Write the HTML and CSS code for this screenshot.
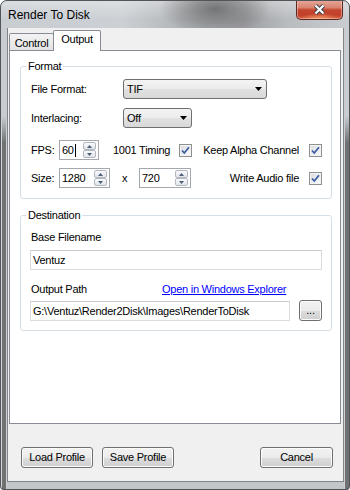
FILE: index.html
```html
<!DOCTYPE html>
<html>
<head>
<meta charset="utf-8">
<title>Render To Disk</title>
<link rel="stylesheet" href="styles.css">
</head>
<body>
<div class="window">
  <div class="titlebar">
    <span class="title">Render To Disk</span>
    <div class="close-btn">
      <svg width="13" height="11" viewBox="0 0 13 11"><path d="M2.5 1.5 L10.5 9.5 M10.5 1.5 L2.5 9.5" stroke="#39404c" stroke-width="4.2" fill="none"/><path d="M2.5 1.5 L10.5 9.5 M10.5 1.5 L2.5 9.5" stroke="#ffffff" stroke-width="2.2" fill="none"/></svg>
    </div>
  </div>
  <div class="frame">
    <div class="client">
      <div class="tabstrip">
        <div class="tab">Control</div>
        <div class="tab active">Output</div>
      </div>
      <div class="panel">
        <fieldset class="group format">
          <legend>Format</legend>
          <div class="row">
            <span class="lbl w92">File Format:</span>
            <div class="combo w144"><span>TIF</span><svg class="arrow" width="7" height="4" viewBox="0 0 7 4"><path d="M0 0H7L3.5 4Z" fill="#000"/></svg></div>
          </div>
          <div class="row mt9">
            <span class="lbl w92">Interlacing:</span>
            <div class="combo w69"><span>Off</span><svg class="arrow" width="7" height="4" viewBox="0 0 7 4"><path d="M0 0H7L3.5 4Z" fill="#000"/></svg></div>
          </div>
          <div class="row mt12">
            <span class="lbl w28">FPS:</span>
            <div class="spin w40"><span class="val">60<i class="caret"></i></span><div class="spin-btns"><b><svg width="5" height="3" viewBox="0 0 5 3"><path d="M0 3H5L2.5 0Z" fill="#4d5c7a"/></svg></b><b><svg width="5" height="3" viewBox="0 0 5 3"><path d="M0 0H5L2.5 3Z" fill="#4d5c7a"/></svg></b></div></div>
            <div class="chkgroup timing"><span>1001 Timing</span><span class="chk"><svg width="11" height="11" viewBox="0 0 11 11"><path d="M2 5.5L4.3 8L9 2.3" stroke="#3c5ca3" stroke-width="1.8" fill="none"/></svg></span></div>
            <div class="chkgroup right"><span>Keep Alpha Channel</span><span class="chk"><svg width="11" height="11" viewBox="0 0 11 11"><path d="M2 5.5L4.3 8L9 2.3" stroke="#3c5ca3" stroke-width="1.8" fill="none"/></svg></span></div>
          </div>
          <div class="row mt8">
            <span class="lbl w28">Size:</span>
            <div class="spin w51"><span class="val">1280</span><div class="spin-btns"><b><svg width="5" height="3" viewBox="0 0 5 3"><path d="M0 3H5L2.5 0Z" fill="#4d5c7a"/></svg></b><b><svg width="5" height="3" viewBox="0 0 5 3"><path d="M0 0H5L2.5 3Z" fill="#4d5c7a"/></svg></b></div></div>
            <span class="times">x</span>
            <div class="spin w52"><span class="val">720</span><div class="spin-btns"><b><svg width="5" height="3" viewBox="0 0 5 3"><path d="M0 3H5L2.5 0Z" fill="#4d5c7a"/></svg></b><b><svg width="5" height="3" viewBox="0 0 5 3"><path d="M0 0H5L2.5 3Z" fill="#4d5c7a"/></svg></b></div></div>
            <div class="chkgroup right"><span>Write Audio file</span><span class="chk"><svg width="11" height="11" viewBox="0 0 11 11"><path d="M2 5.5L4.3 8L9 2.3" stroke="#3c5ca3" stroke-width="1.8" fill="none"/></svg></span></div>
          </div>
        </fieldset>
        <fieldset class="group dest">
          <legend>Destination</legend>
          <div class="textrow"><span class="lbl ml1">Base Filename</span></div>
          <div class="tb mt6">Ventuz</div>
          <div class="textrow mt12"><span class="lbl ml1 w131">Output Path</span><a class="link" href="#">Open in Windows Explorer</a></div>
          <div class="pathrow mt4">
            <div class="tb grow">G:\Ventuz\Render2Disk\Images\RenderToDisk</div>
            <button class="btn browse">...</button>
          </div>
        </fieldset>
      </div>
      <div class="buttons">
        <button class="btn w72">Load Profile</button>
        <button class="btn w72">Save Profile</button>
        <button class="btn w73 cancel">Cancel</button>
      </div>
    </div>
  </div>
</div>
</body>
</html>
```
FILE: styles.css
```css
* { box-sizing: border-box; }
html, body { margin: 0; padding: 0; }
body {
  width: 350px;
  height: 490px;
  overflow: hidden;
  background: #ffffff;
  font-family: "Liberation Sans", Arial, sans-serif;
  font-size: 11px;
  letter-spacing: -0.25px;
  color: #000;
}
.window {
  width: 350px;
  height: 490px;
  display: flex;
  flex-direction: column;
  border-radius: 7px 7px 4px 4px;
  overflow: hidden;
  outline: 1px solid #50555b;
  outline-offset: -1px;
}
.titlebar {
  height: 28px;
  flex: none;
  display: flex;
  background:
    radial-gradient(ellipse 55px 26px at 215px 9px, rgba(112,113,115,0.95), rgba(112,113,115,0) 100%),
    linear-gradient(180deg, rgba(255,255,255,0.35), rgba(255,255,255,0) 70%),
    linear-gradient(90deg, #c8cdd2 0%, #ccd0d4 35%, #b1b4b7 52%, #9c9ea1 70%, #b9bcbf 82%, #c9ccd0 100%);
}
.title {
  font-family: "Liberation Sans", Arial, sans-serif;
  font-size: 12px;
  letter-spacing: 0;
  line-height: 14px;
  padding: 8px 0 0 8px;
  color: #000;
}
.close-btn {
  margin-left: auto;
  margin-right: 7px;
  width: 47px;
  height: 20px;
  border: 1px solid #5a2a24;
  border-top: none;
  border-radius: 0 0 5px 5px;
  background:
    radial-gradient(ellipse 20px 6px at 50% 100%, rgba(255,170,110,0.8), rgba(255,170,110,0)),
    linear-gradient(180deg, #e6a99a 0%, #d98470 40%, #c6452e 52%, #c0402a 78%, #d45a3f 100%);
  box-shadow: inset 0 0 0 1px rgba(255,220,210,0.45);
  display: flex;
  align-items: center;
  justify-content: center;
}
.frame {
  flex: 1;
  display: flex;
  padding: 0 6px 8px 7px;
  background:
    linear-gradient(180deg, #c9cdd1 0px, #c9cdd1 88px, rgba(201,205,209,0) 115px),
    linear-gradient(90deg, #a2a6aa 0 1px, #d6d9dc 1px 2px, #6f7173 2px 6px, #cfd1d3 6px 7px, #c3c6c9 7px calc(100% - 6px), #cfd1d3 calc(100% - 6px) calc(100% - 5px), #6f7173 calc(100% - 5px) calc(100% - 1px), #a2a6aa calc(100% - 1px));
}
.client {
  flex: 1;
  display: flex;
  flex-direction: column;
  background: #f0f0f0;
  border: 1px solid #80858a;
  border-top: none;
}
.tabstrip {
  height: 22px;
  flex: none;
  display: flex;
  align-items: flex-end;
  padding-left: 1px;
}
.tab {
  width: 45px;
  height: 17px;
  border: 1px solid #898c95;
  border-bottom: none;
  border-radius: 2px 2px 0 0;
  background: linear-gradient(180deg, #f3f3f3, #e3e3e3);
  text-align: center;
  line-height: 16px;
  padding-top: 1px;
}
.tab.active {
  width: 48px;
  height: 21px;
  margin-left: -1px;
  margin-bottom: -1px;
  padding-top: 0;
  background: #ffffff;
  position: relative;
  z-index: 1;
}
.panel {
  height: 374px;
  flex: none;
  margin: 0 2px 0 1px;
  border: 1px solid #898c95;
  background: #ffffff;
  padding: 9px 8px 0 10px;
}
.group {
  margin: 0;
  min-width: 0;
  border: 1px solid #d5dfe5;
  border-radius: 3px;
  padding: 6px 9px 10px 10px;
}
.group legend {
  padding: 0 2px;
  margin-left: -5px;
  line-height: 13px;
}
.dest {
  margin-top: 10px;
  padding: 8px 9px 9px 9px;
}
.dest legend { margin-left: -4px; }
.row {
  display: flex;
  align-items: center;
  height: 20px;
  white-space: nowrap;
}
.mt4 { margin-top: 4px; }
.mt6 { margin-top: 6px; }
.mt8 { margin-top: 8px; }
.mt9 { margin-top: 9px; }
.mt12 { margin-top: 12px; }
.ml1 { margin-left: 1px; }
.lbl { flex: none; }
.w28 { width: 28px; }
.w92 { width: 92px; }
.w131 { width: 131px; }
.w144 { width: 144px; }
.w69 { width: 69px; }
.w40 { width: 40px; }
.w51 { width: 51px; }
.w52 { width: 52px; }
.w72 { width: 72px; }
.w73 { width: 73px; }
.combo {
  flex: none;
  height: 20px;
  border: 1px solid #707070;
  border-radius: 3px;
  background: linear-gradient(180deg, #f4f4f4 0%, #ebebeb 50%, #e1e1e1 51%, #d8d8d8 100%);
  display: flex;
  align-items: center;
  padding: 0 4px 0 3px;
}
.combo .arrow { margin-left: auto; }
.spin {
  flex: none;
  height: 20px;
  border: 1px solid #a4a9b0;
  background: #ffffff;
  display: flex;
  padding: 1px 2px 1px 2px;
}
.spin .val {
  flex: 1;
  line-height: 16px;
  white-space: nowrap;
}
.caret {
  display: inline-block;
  width: 1px;
  height: 13px;
  background: #000;
  vertical-align: -3px;
  margin-left: 1px;
}
.spin-btns {
  width: 13px;
  display: flex;
  flex-direction: column;
}
.spin-btns b {
  flex: 1;
  border: 1px solid #b3b8c0;
  border-radius: 2px;
  background: linear-gradient(180deg, #fafbfc, #e0e4e9);
  display: flex;
  align-items: center;
  justify-content: center;
}
.chkgroup {
  display: flex;
  align-items: center;
  gap: 10px;
  white-space: nowrap;
  flex: none;
}
.chkgroup.timing {
  width: 79px;
  gap: 0;
  margin-left: 14px;
  justify-content: space-between;
}
.chkgroup.right { margin-left: auto; }
.chk {
  flex: none;
  width: 13px;
  height: 13px;
  border: 1px solid #8e8f8f;
  background: linear-gradient(135deg, #d6d8db 0%, #eef0f2 60%, #fbfbfb 100%);
  box-shadow: inset 0 0 0 1px #f4f4f4;
  display: flex;
}
.times {
  width: 29px;
  text-align: center;
  flex: none;
}
.textrow {
  display: flex;
  align-items: center;
  height: 14px;
  white-space: nowrap;
}
.tb {
  height: 20px;
  border: 1px solid #d9dde2;
  border-top-color: #c9ced4;
  background: #ffffff;
  padding-left: 2px;
  line-height: 18px;
  white-space: nowrap;
  overflow: hidden;
}
.grow { flex: 1; }
.link {
  color: #0000ff;
  text-decoration: underline;
}
.pathrow {
  display: flex;
  align-items: center;
  height: 21px;
}
.btn {
  height: 21px;
  padding: 0;
  border: 1px solid #707070;
  border-radius: 3px;
  background: linear-gradient(180deg, #f2f2f2 0%, #ebebeb 50%, #dddddd 51%, #cfcfcf 100%);
  box-shadow: inset 0 0 0 1px #fbfbfb;
  font: inherit;
  letter-spacing: inherit;
  color: #000;
  text-align: center;
  line-height: 19px;
  white-space: nowrap;
}
.browse {
  width: 23px;
  margin-left: 9px;
  flex: none;
}
.buttons {
  display: flex;
  gap: 9px;
  margin-top: 23px;
  padding: 0 10px 0 13px;
}
.cancel { margin-left: auto; }
```
